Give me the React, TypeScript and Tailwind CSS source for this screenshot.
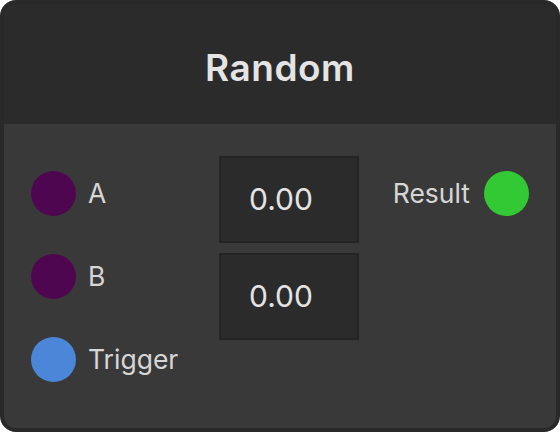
type Port = {
  label: string;
  color: string;
};

const inputs: Port[] = [
  { label: 'A', color: 'bg-[#4f0650]' },
  { label: 'B', color: 'bg-[#4f0650]' },
  { label: 'Trigger', color: 'bg-[#4c86d9]' },
];

const values = ['0.00', '0.00'];

const Dot = ({ color }: { color: string }) => (
  <span className={`block w-[45px] h-[45px] rounded-full shrink-0 ${color}`} />
);

const App = () => {
  return (
    <div className="w-[560px] h-[432px] bg-white" style={{ fontFamily: 'Inter, "Noto Sans", sans-serif' }}>
      <div className="w-full h-full flex flex-col rounded-[16px] border-4 border-[#292929] bg-[#2b2b2b] overflow-hidden">
        <header className="h-[120px] shrink-0 flex items-center justify-center pt-[8px]">
          <h1 className="text-[37px] font-semibold text-[#e4e4e4] tracking-[0.5px]">Random</h1>
        </header>

        <section className="flex-1 flex bg-[#393939] px-[27px]">
          <div className="w-[188px] flex flex-col pt-[28px]">
            {inputs.map((port) => (
              <div key={port.label} className="h-[83px] flex items-center gap-[12px]">
                <Dot color={port.color} />
                <span className="text-[26.5px] text-[#d6d6d6]">{port.label}</span>
              </div>
            ))}
          </div>

          <div className="w-[140px] flex flex-col gap-[10px] pt-[32px]">
            {values.map((v, i) => (
              <div
                key={i}
                className="h-[87px] flex items-center pl-[28px] bg-[#2b2b2b] border-2 border-[#242424] text-[30px] text-[#e4e4e4]"
              >
                {v}
              </div>
            ))}
          </div>

          <div className="flex-1 flex justify-end pt-[28px]">
            <div className="h-[83px] flex items-center gap-[14px]">
              <span className="text-[26.5px] text-[#d6d6d6]">Result</span>
              <Dot color="bg-[#33c934]" />
            </div>
          </div>
        </section>
      </div>
    </div>
  );
};

export default App;
